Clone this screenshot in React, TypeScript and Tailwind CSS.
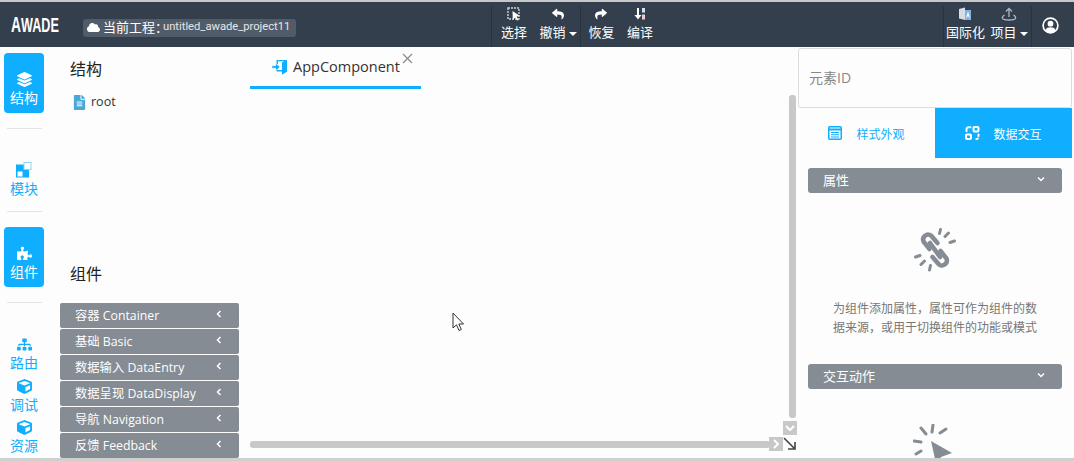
import { FaCloud, FaCube, FaFileAlt, FaLayerGroup, FaPuzzlePiece, FaReply, FaShare, FaSitemap } from 'react-icons/fa'

const FONT = 'font-["Open_Sans","Noto_Sans_CJK_SC",sans-serif]'

const sections = ['容器 Container', '基础 Basic', '数据输入 DataEntry', '数据呈现 DataDisplay', '导航 Navigation', '反馈 Feedback']

function Caret() {
  return <span className="ml-[3px] inline-block border-x-[4px] border-t-[4px] border-x-transparent border-t-white align-middle" />
}

function SelectIcon() {
  return (
    <svg width="14" height="14" viewBox="0 0 14 14">
      <rect x="1" y="1" width="11" height="11" fill="none" stroke="#cfd3d8" strokeWidth="1.4" strokeDasharray="2 1" />
      <path d="M5.5 4 L13 9 L9.7 9.6 L11.5 13 L10 13.6 L8.3 10.4 L5.8 12.5 Z" fill="#fff" />
    </svg>
  )
}

function CompileIcon() {
  return (
    <svg width="12" height="14" viewBox="0 0 12 14">
      <path d="M3 1h2v7h2.5L4 12.5.5 8H3z" fill="#fff" />
      <rect x="8" y="1" width="3" height="4.5" fill="#cfe2f5" />
      <rect x="8" y="7.5" width="3" height="5" fill="#eec7d6" />
    </svg>
  )
}

function I18nIcon() {
  return (
    <svg width="14" height="15" viewBox="0 0 14 15">
      <path d="M1 2l6-1.5V13L1 11.5z" fill="#d8dde3" />
      <path d="M7 3h6v10H7z" fill="#7fb4e4" />
      <path d="M10 4.500l1.800 6h-1l-.3-1.200H9.400l-.3 1.200h-1z" fill="#fff" />
    </svg>
  )
}

function UploadIcon() {
  return (
    <svg width="16" height="15" viewBox="0 0 16 15" fill="none" stroke="#aeb6bf" strokeWidth="1.3">
      <path d="M8 10V2M5 4.500 8 1.500l3 3" />
      <path d="M3.500 8C1.800 9 1 10 1.500 11.500 2.500 13.500 13.500 13.500 14.500 11.500 15 10 14.200 9 12.500 8" />
    </svg>
  )
}

function UserIcon() {
  return (
    <svg width="17" height="17" viewBox="0 0 17 17">
      <circle cx="8.500" cy="8.500" r="7.400" fill="none" stroke="#fff" strokeWidth="1.700" />
      <circle cx="8.500" cy="6.700" r="2.900" fill="#fff" />
      <path d="M3.400 13.400C4.200 10.900 6.300 10.300 8.500 10.300s4.300.6 5.100 3.100C12.300 14.900 10.500 15.700 8.500 15.700s-3.800-.8-5.100-2.300z" fill="#fff" />
    </svg>
  )
}

function ModuleIcon() {
  return (
    <svg width="16" height="16" viewBox="0 0 16 16">
      <rect x="0" y="2.500" width="13" height="13" fill="#10aeff" />
      <rect x="1.500" y="9.500" width="5" height="5" fill="#fff" />
      <rect x="8" y="0.500" width="7" height="7" fill="#fff" stroke="#8fd3f7" strokeWidth="1" />
    </svg>
  )
}

function EnterIcon() {
  return (
    <svg width="16" height="16" viewBox="0 0 16 16">
      <path d="M4.500 1H15v11.500L10 15.500V12.500H4.500V10.500H6V11h4V3.500L12.500 2.300H6V5H4.500z" fill="#10aeff" />
      <path d="M10 3.500 15 1v11.500l-5 3z" fill="#10aeff" />
      <path d="M0 6.700h3.800V4.200L8 8l-4.200 3.800V9.300H0z" fill="#10aeff" stroke="#fff" strokeWidth="0.500" />
    </svg>
  )
}

function StyleIcon() {
  return (
    <svg width="14" height="14" viewBox="0 0 14 14" fill="none" stroke="#10aeff" strokeWidth="1.500">
      <rect x="0.750" y="0.750" width="12.500" height="12.500" rx="1" />
      <path d="M1 3.500h12" strokeWidth="2" />
      <path d="M3 6.500h8M3 8.750h8M3 11h8" strokeWidth="1.200" />
    </svg>
  )
}

function DataIcon() {
  return (
    <svg width="15" height="14" viewBox="0 0 15 14" fill="none" stroke="#fff" strokeWidth="2" strokeLinecap="round">
      <rect x="8.500" y="1" width="5" height="4.500" rx="1" />
      <rect x="1" y="8.500" width="5" height="4.500" rx="1" />
      <path d="M5.500 1.200H3.500A2 2 0 0 0 1.500 3.200v2" />
      <path d="M13.500 8.500v2.500a2 2 0 0 1-2 2H9.500" strokeDasharray="1.500 2.500" />
    </svg>
  )
}

function BrokenLinkIcon() {
  return (
    <svg width="44" height="44" viewBox="0 0 44 44" fill="none" stroke="#858c93" strokeLinecap="round">
      <g strokeWidth="4.500">
        <path d="M16.500 21 10.500 13.500A5 5 0 0 1 18 7.500L24.500 15" />
        <path d="M27.500 23 33.500 30.500A5 5 0 0 1 26 36.500L19.500 29" />
        <path d="M17 15 27 29" />
      </g>
      <g strokeWidth="3">
        <path d="M27.500 1.500 26.500 5.500M35.500 5 32 8.500M41.500 13 37 14.500" />
        <path d="M2.500 29 7 27.500M8 36.500 11.500 33M16.500 42 17.500 37.500" />
      </g>
    </svg>
  )
}

function ClickIcon() {
  return (
    <svg width="44" height="36" viewBox="0 0 44 36" className="block">
      <g stroke="#858c93" strokeWidth="3" strokeLinecap="round">
        <path d="M8 4 13 10M20 1 19 8M33 5 27 9M1 17 8 18M3 30 8 27" />
      </g>
      <path d="M18 17 39 29 28 33 24 44Z" fill="#858c93" />
    </svg>
  )
}

function TopAction({ icon, label, caret }: { icon: React.ReactNode; label: string; caret?: boolean }) {
  return (
    <div className="flex flex-col items-center">
      <div className="flex h-[16px] items-center">{icon}</div>
      <div className="mt-[2px] whitespace-nowrap text-[13px] leading-[17px] text-white">
        {label}
        {caret && <Caret />}
      </div>
    </div>
  )
}

function RailButton({ icon, label, active }: { icon: React.ReactNode; label: string; active?: boolean }) {
  return (
    <div className={`flex w-10 flex-col items-center rounded-[4px] ${active ? 'h-[60px] bg-[#10aeff] pt-[18px] text-white' : 'text-[#10aeff]'}`}>
      <div className="flex h-[16px] items-center">{icon}</div>
      <div className="mt-[1px] text-[14px] leading-[20px]">{label}</div>
    </div>
  )
}

function Bar({ title }: { title: string }) {
  return (
    <div className="flex h-[25px] items-center justify-between rounded-[3px] bg-[#858c93] pl-[15px] pr-[17px] text-[13px] text-white">
      <span>{title}</span>
      <svg width="8" height="6" viewBox="0 0 8 6" fill="none" stroke="#fff" strokeWidth="1.500" className="-mt-[3px]"><path d="M1 1.500 4 4.500 7 1.500" /></svg>
    </div>
  )
}

export default function App() {
  return (
    <div className={`relative flex h-[461px] w-[1074px] flex-col overflow-hidden bg-[#fdfdfd] ${FONT}`}>
      <div className="h-[2px] bg-[#c8c8c8]" />
      {/* header */}
      <header className="flex h-[45px] items-stretch bg-[#343f4d] text-white">
        <div className="flex w-[491px] items-center">
          <span className='ml-[11px] w-[60px] origin-left scale-x-[0.63] whitespace-nowrap font-["Liberation_Sans",sans-serif] text-[22px] font-bold leading-none'>
            A<span className="text-[20px]">WADE</span>
          </span>
          <div className="ml-[12px] mt-[6px] flex h-[18px] items-center rounded-[3px] bg-[#525c69] pl-[4px] pr-[6px] text-[13px]">
            <FaCloud className="mr-[3px] text-[13px] text-white" />
            <span>当前工程：</span>
            <span className='-ml-[5px] font-["Roboto",sans-serif] text-[11.200px] text-[#e4e7ea]'>untitled_awade_project11</span>
          </div>
        </div>
        <div className="flex pt-[4px]">
          <div className="flex h-[41px] w-[45px] justify-center border-l border-[#29323d]"><TopAction icon={<SelectIcon />} label="选择" /></div>
          <div className="flex h-[41px] w-[44px] justify-center"><TopAction icon={<FaReply className="text-[12px]" />} label="撤销" caret /></div>
          <div className="flex h-[41px] w-[42px] justify-center border-l border-[#29323d]"><TopAction icon={<FaShare className="text-[12px]" />} label="恢复" /></div>
          <div className="flex h-[41px] w-[36px] justify-center"><TopAction icon={<CompileIcon />} label="编译" /></div>
        </div>
        <div className="flex-1" />
        <div className="flex w-[131px] pt-[4px]">
          <div className="flex h-[41px] w-[44px] justify-center border-l border-[#29323d]"><TopAction icon={<I18nIcon />} label="国际化" /></div>
          <div className="flex h-[41px] w-[44px] justify-center"><TopAction icon={<UploadIcon />} label="项目" caret /></div>
          <div className="flex h-[41px] flex-1 items-center justify-center border-l border-[#29323d] pr-[6px]"><div className="-mt-[3px]"><UserIcon /></div></div>
        </div>
      </header>

      {/* body */}
      <div className="flex min-h-0 flex-1">
        <nav className="flex w-[60px] shrink-0 flex-col items-center pt-[6px] pr-[12px]">
          <RailButton active icon={<FaLayerGroup className="text-[15px]" />} label="结构" />
          <div className="mt-[15px] h-px w-[35px] shrink-0 bg-[#e4e4e4]" />
          <div className="mt-[33px]"><RailButton icon={<ModuleIcon />} label="模块" /></div>
          <div className="mt-[12px] h-px w-[35px] shrink-0 bg-[#e4e4e4]" />
          <div className="mt-[15px]"><RailButton active icon={<FaPuzzlePiece className="text-[15px]" />} label="组件" /></div>
          <div className="mt-[15px] h-px w-[35px] shrink-0 bg-[#e4e4e4]" />
          <div className="mt-[33px]"><RailButton icon={<FaSitemap className="text-[15px]" />} label="路由" /></div>
          <div className="mt-[5px]"><RailButton icon={<FaCube className="text-[15px]" />} label="调试" /></div>
          <div className="mt-[4px]"><RailButton icon={<FaCube className="text-[15px]" />} label="资源" /></div>
        </nav>

        <aside className="flex w-[179px] shrink-0 flex-col">
          <div className="mt-[10px] pl-[10px] text-[16px] leading-[24px] text-[#222]">结构</div>
          <div className="mt-[12px] flex items-center pl-[12px] text-[12.500px] text-[#333]">
            <FaFileAlt className="mr-[4px] text-[15px] text-[#4aa8d8]" />
            root
          </div>
          <div className="mt-[150px] pl-[10px] text-[16px] leading-[24px] text-[#222]">组件</div>
          <div className="mt-[17px] flex flex-col gap-px">
            {sections.map((s) => (
              <div key={s} className="flex h-[25px] items-center justify-between rounded-[2px] bg-[#858c93] pl-[15px] pr-[17px] pt-[1px] text-[12.300px] text-white">
                <span>{s}</span>
                <svg width="6" height="8" viewBox="0 0 6 8" fill="none" stroke="#fff" strokeWidth="1.500" className="-mt-[3px]"><path d="M4.500 1 1.500 4 4.500 7" /></svg>
              </div>
            ))}
          </div>
        </aside>

        <main className="relative min-w-0 flex-1 pl-[11px]">
          <div className="flex h-[42px] w-[171px] items-center border-b-[3px] border-[#10aeff] pl-[22px]">
            <EnterIcon />
            <span className="ml-[5px] text-[14.500px] text-[#333]">AppComponent</span>
            <svg width="11" height="11" viewBox="0 0 11 11" className="-mt-[16px] ml-[2px]" fill="none" stroke="#8a8a8a" strokeWidth="1.200"><path d="M1 1l9 9M10 1l-9 9" /></svg>
          </div>
          {/* scrollbars */}
          <div className="absolute left-[550px] top-[48px] h-[323px] w-[7px] rounded-[3px] bg-[#c8c8c8]" />
          <div className="absolute left-[544px] top-[374px] flex h-[14px] w-[14px] items-center justify-center bg-[#c8c8c8]">
            <svg width="10" height="7" viewBox="0 0 10 7" fill="none" stroke="#fff" strokeWidth="2"><path d="M1 1l4 4 4-4" /></svg>
          </div>
          <div className="absolute left-[11px] top-[394px] h-[7px] w-[520px] rounded-[3px] bg-[#c8c8c8]" />
          <div className="absolute left-[530px] top-[390px] flex h-[14px] w-[14px] items-center justify-center bg-[#c8c8c8]">
            <svg width="7" height="10" viewBox="0 0 7 10" fill="none" stroke="#fff" strokeWidth="2"><path d="M1 1l4 4-4 4" /></svg>
          </div>
          <svg width="14" height="14" viewBox="0 0 14 14" className="absolute left-[544px] top-[390px]" fill="none" stroke="#444" strokeWidth="1.600">
            <path d="M1 1l11 11M12 5v7H5" />
          </svg>
          {/* mouse pointer */}
          <svg width="14" height="20" viewBox="0 0 14 20" className="absolute left-[213px] top-[265px]">
            <path d="M1 1v15l3.500-3.200 2.500 5.700 2.300-1-2.500-5.500h4.700z" fill="#fff" stroke="#333" strokeWidth="1" />
          </svg>
        </main>

        <aside className="flex w-[276px] shrink-0 flex-col pr-[2px]">
          <div className="mt-[1px] flex h-[60px] items-center rounded-[3px] border border-[#dcdcdc] pb-[2px] pl-[10px] text-[14px] text-[#888]">元素ID</div>
          <div className="flex h-[50px]">
            <div className="flex flex-1 items-center justify-center text-[12px] text-[#10aeff]">
              <StyleIcon />
              <span className="ml-[14px] pt-[3px]">样式外观</span>
            </div>
            <div className="flex flex-1 items-center justify-center bg-[#10aeff] text-[12px] text-white">
              <DataIcon />
              <span className="ml-[13px] pt-[3px]">数据交互</span>
            </div>
          </div>
          <div className="mt-[10px] px-[10px]"><Bar title="属性" /></div>
          <div className="mt-[35px] flex justify-center"><BrokenLinkIcon /></div>
          <p className="mx-auto mt-[27px] w-[208px] text-center text-[12px] leading-[19px] text-[#777]">为组件添加属性，属性可作为组件的数据来源，或用于切换组件的功能或模式</p>
          <div className="mt-[27px] px-[10px]"><Bar title="交互动作" /></div>
          <div className="mt-[35px] flex justify-center overflow-hidden"><ClickIcon /></div>
        </aside>
      </div>
      <div className="absolute bottom-0 left-0 right-0 h-[3px] bg-[#d0d0d0]" />
    </div>
  )
}
